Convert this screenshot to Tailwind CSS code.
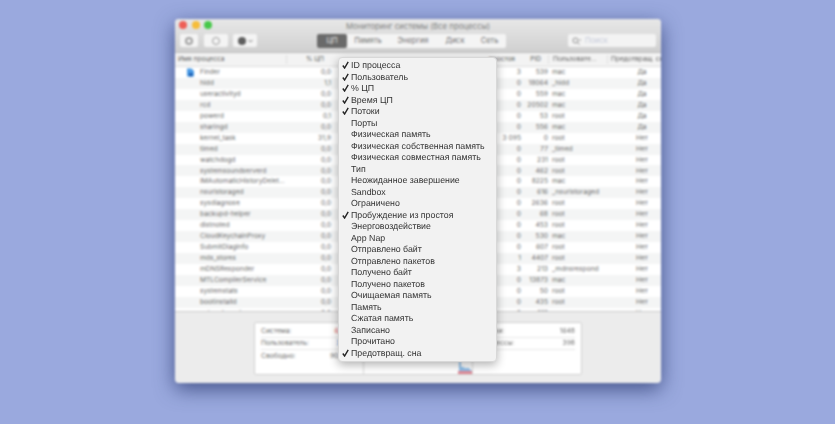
<!DOCTYPE html>
<html lang="ru">
<head>
<meta charset="utf-8">
<script src="https://cdn.jsdelivr.net/npm/@tailwindcss/browser@4"></script>
</head>
<body class="w-[835px] h-[424px] overflow-hidden relative bg-[#9aa9de] font-['Inter','Liberation_Sans',sans-serif]">
<div class="absolute left-[175px] top-[19px] w-[486px] h-[364px] blur-[0.9px] rounded-[4px] overflow-hidden bg-[#ececec] flex flex-col shadow-[0_6px_20px_rgba(30,45,100,0.7)]">
  <div class="h-[34px] shrink-0 relative bg-gradient-to-b from-[#e8e8e8] to-[#d0d0d0] border-b border-[#bdbdbd]">
    <div class="absolute left-[4px] top-[2px] flex gap-[4.5px]">
      <span class="w-[8px] h-[8px] rounded-full bg-[#ee5f57]"></span>
      <span class="w-[8px] h-[8px] rounded-full bg-[#f6bd3a]"></span>
      <span class="w-[8px] h-[8px] rounded-full bg-[#47c849]"></span>
    </div>
    <div class="text-center text-[7.8px] leading-[9px] pt-[3px] text-[#808080]">Мониторинг системы (Все процессы)</div>
    <div class="absolute left-[5px] top-[15px] flex">
      <div class="w-[18px] h-[13px] rounded-[2px] bg-[#f4f4f4] flex items-center justify-center"><span class="w-[8px] h-[8px] rounded-full border-2 border-[#a0a0a0]"></span></div>
      <div class="w-[24px] h-[13px] ml-[6px] rounded-[2px] bg-[#f4f4f4] flex items-center justify-center"><span class="w-[8px] h-[8px] rounded-full border border-[#9a9a9a]"></span></div>
      <div class="w-[24px] h-[13px] ml-[5px] rounded-[2px] bg-[#f4f4f4] flex items-center justify-center gap-[2px]"><span class="w-[8px] h-[8px] rounded-full bg-[#5e5e5e]"></span><svg width="5" height="4" viewBox="0 0 5 4" fill="none" stroke="#777" stroke-width="1"><path d="M.5 1 2.5 3 4.5 1"/></svg></div>
    </div>
    <div class="absolute left-[142px] top-[15px] h-[14px] w-[189px] flex text-[7.5px] text-[#6f6f6f] rounded-[2px] bg-[#f4f4f4] items-center">
      <div class="w-[30px] h-full rounded-[2px] bg-[#6a6a6a] text-[#eee] flex items-center justify-center">ЦП</div>
      <div class="w-[42px] text-center">Память</div>
      <div class="w-[48px] text-center">Энергия</div>
      <div class="w-[36px] text-center">Диск</div>
      <div class="w-[33px] text-center">Сеть</div>
    </div>
    <div class="absolute left-[393px] top-[15px] w-[88px] h-[13px] rounded-[2px] bg-[#f3f3f3] flex items-center gap-[3px] pl-[4px] text-[7.5px] text-[#c3c8d8]">
      <svg width="10" height="8" viewBox="0 0 10 8" fill="none" stroke="#8c8c8c" stroke-width="1"><circle cx="3.5" cy="3.5" r="2.5"/><path d="M5.3 5.3 7.5 7.5M7.5 3 9 3"/></svg>Поиск
    </div>
  </div>
  <div class="h-[14px] shrink-0 grid grid-cols-[162px_1fr_27px_59px_54px] items-center bg-[#f3f3f3] border-b border-[#dddddd] text-[6.6px] text-[#5c5c5c]">
    <div class="flex"><span class="w-[112px] pl-[3px] border-r border-[#e0e0e0]">Имя процесса</span><span class="flex-1 text-right pr-[13px]">% ЦП</span></div>
    <div class="text-right pr-[6px]">простоя</div>
    <div class="text-right pr-[7px]">PID</div>
    <div class="pl-[4px] whitespace-nowrap overflow-hidden border-l border-[#e0e0e0]">Пользовате...</div>
    <div class="pl-[3px] whitespace-nowrap overflow-hidden border-l border-[#e0e0e0]">Предотвращ. сна</div>
  </div>
  <div class="h-[245px] shrink-0 overflow-hidden bg-white text-[6.7px] text-[#6a6a6a] border-b border-[#c9c9c9]">
    <div class="h-[10.95px] bg-white grid grid-cols-[162px_1fr_27px_59px_54px] items-center leading-none"><div class="flex justify-between pr-[6px] pl-[25px] relative"><svg class="absolute left-[12px] -top-[1.5px]" width="7" height="9" viewBox="0 0 7 9"><path d="M0 .5h4.5L7 3v5.5H0z" fill="#4a9be6"/><path d="M2 5h3.5v3.5H2z" fill="#1d5fb0"/></svg><span>Finder</span><span>0,0</span></div><div class="text-right">3</div><div class="text-right">539</div><div class="pl-[4px]">mac</div><div class="text-center pl-[16px]">Да</div></div>
    <div class="h-[10.95px] bg-[#f4f5f5] grid grid-cols-[162px_1fr_27px_59px_54px] items-center leading-none"><div class="flex justify-between pr-[6px] pl-[25px]"><span>hidd</span><span>1,1</span></div><div class="text-right">0</div><div class="text-right">18064</div><div class="pl-[4px]">_hidd</div><div class="text-center pl-[16px]">Да</div></div>
    <div class="h-[10.95px] bg-white grid grid-cols-[162px_1fr_27px_59px_54px] items-center leading-none"><div class="flex justify-between pr-[6px] pl-[25px]"><span>useractivityd</span><span>0,0</span></div><div class="text-right">0</div><div class="text-right">559</div><div class="pl-[4px]">mac</div><div class="text-center pl-[16px]">Да</div></div>
    <div class="h-[10.95px] bg-[#f4f5f5] grid grid-cols-[162px_1fr_27px_59px_54px] items-center leading-none"><div class="flex justify-between pr-[6px] pl-[25px]"><span>rcd</span><span>0,0</span></div><div class="text-right">0</div><div class="text-right">20502</div><div class="pl-[4px]">mac</div><div class="text-center pl-[16px]">Да</div></div>
    <div class="h-[10.95px] bg-white grid grid-cols-[162px_1fr_27px_59px_54px] items-center leading-none"><div class="flex justify-between pr-[6px] pl-[25px]"><span>powerd</span><span>0,1</span></div><div class="text-right">0</div><div class="text-right">53</div><div class="pl-[4px]">root</div><div class="text-center pl-[16px]">Да</div></div>
    <div class="h-[10.95px] bg-[#f4f5f5] grid grid-cols-[162px_1fr_27px_59px_54px] items-center leading-none"><div class="flex justify-between pr-[6px] pl-[25px]"><span>sharingd</span><span>0,0</span></div><div class="text-right">0</div><div class="text-right">556</div><div class="pl-[4px]">mac</div><div class="text-center pl-[16px]">Да</div></div>
    <div class="h-[10.95px] bg-white grid grid-cols-[162px_1fr_27px_59px_54px] items-center leading-none"><div class="flex justify-between pr-[6px] pl-[25px]"><span>kernel_task</span><span>31,9</span></div><div class="text-right">3 095</div><div class="text-right">0</div><div class="pl-[4px]">root</div><div class="text-center pl-[16px]">Нет</div></div>
    <div class="h-[10.95px] bg-[#f4f5f5] grid grid-cols-[162px_1fr_27px_59px_54px] items-center leading-none"><div class="flex justify-between pr-[6px] pl-[25px]"><span>timed</span><span>0,0</span></div><div class="text-right">0</div><div class="text-right">77</div><div class="pl-[4px]">_timed</div><div class="text-center pl-[16px]">Нет</div></div>
    <div class="h-[10.95px] bg-white grid grid-cols-[162px_1fr_27px_59px_54px] items-center leading-none"><div class="flex justify-between pr-[6px] pl-[25px]"><span>watchdogd</span><span>0,0</span></div><div class="text-right">0</div><div class="text-right">231</div><div class="pl-[4px]">root</div><div class="text-center pl-[16px]">Нет</div></div>
    <div class="h-[10.95px] bg-[#f4f5f5] grid grid-cols-[162px_1fr_27px_59px_54px] items-center leading-none"><div class="flex justify-between pr-[6px] pl-[25px]"><span>systemsoundserverd</span><span>0,0</span></div><div class="text-right">0</div><div class="text-right">462</div><div class="pl-[4px]">root</div><div class="text-center pl-[16px]">Нет</div></div>
    <div class="h-[10.95px] bg-white grid grid-cols-[162px_1fr_27px_59px_54px] items-center leading-none"><div class="flex justify-between pr-[6px] pl-[25px]"><span>IMAutomaticHistoryDelet...</span><span>0,0</span></div><div class="text-right">0</div><div class="text-right">8225</div><div class="pl-[4px]">mac</div><div class="text-center pl-[16px]">Нет</div></div>
    <div class="h-[10.95px] bg-[#f4f5f5] grid grid-cols-[162px_1fr_27px_59px_54px] items-center leading-none"><div class="flex justify-between pr-[6px] pl-[25px]"><span>nsurlstoraged</span><span>0,0</span></div><div class="text-right">0</div><div class="text-right">616</div><div class="pl-[4px]">_nsurlstoraged</div><div class="text-center pl-[16px]">Нет</div></div>
    <div class="h-[10.95px] bg-white grid grid-cols-[162px_1fr_27px_59px_54px] items-center leading-none"><div class="flex justify-between pr-[6px] pl-[25px]"><span>sysdiagnose</span><span>0,0</span></div><div class="text-right">0</div><div class="text-right">2636</div><div class="pl-[4px]">root</div><div class="text-center pl-[16px]">Нет</div></div>
    <div class="h-[10.95px] bg-[#f4f5f5] grid grid-cols-[162px_1fr_27px_59px_54px] items-center leading-none"><div class="flex justify-between pr-[6px] pl-[25px]"><span>backupd-helper</span><span>0,0</span></div><div class="text-right">0</div><div class="text-right">68</div><div class="pl-[4px]">root</div><div class="text-center pl-[16px]">Нет</div></div>
    <div class="h-[10.95px] bg-white grid grid-cols-[162px_1fr_27px_59px_54px] items-center leading-none"><div class="flex justify-between pr-[6px] pl-[25px]"><span>distnoted</span><span>0,0</span></div><div class="text-right">0</div><div class="text-right">453</div><div class="pl-[4px]">root</div><div class="text-center pl-[16px]">Нет</div></div>
    <div class="h-[10.95px] bg-[#f4f5f5] grid grid-cols-[162px_1fr_27px_59px_54px] items-center leading-none"><div class="flex justify-between pr-[6px] pl-[25px]"><span>CloudKeychainProxy</span><span>0,0</span></div><div class="text-right">0</div><div class="text-right">530</div><div class="pl-[4px]">mac</div><div class="text-center pl-[16px]">Нет</div></div>
    <div class="h-[10.95px] bg-white grid grid-cols-[162px_1fr_27px_59px_54px] items-center leading-none"><div class="flex justify-between pr-[6px] pl-[25px]"><span>SubmitDiagInfo</span><span>0,0</span></div><div class="text-right">0</div><div class="text-right">607</div><div class="pl-[4px]">root</div><div class="text-center pl-[16px]">Нет</div></div>
    <div class="h-[10.95px] bg-[#f4f5f5] grid grid-cols-[162px_1fr_27px_59px_54px] items-center leading-none"><div class="flex justify-between pr-[6px] pl-[25px]"><span>mds_stores</span><span>0,0</span></div><div class="text-right">1</div><div class="text-right">4407</div><div class="pl-[4px]">root</div><div class="text-center pl-[16px]">Нет</div></div>
    <div class="h-[10.95px] bg-white grid grid-cols-[162px_1fr_27px_59px_54px] items-center leading-none"><div class="flex justify-between pr-[6px] pl-[25px]"><span>mDNSResponder</span><span>0,0</span></div><div class="text-right">3</div><div class="text-right">213</div><div class="pl-[4px]">_mdnsrespond</div><div class="text-center pl-[16px]">Нет</div></div>
    <div class="h-[10.95px] bg-[#f4f5f5] grid grid-cols-[162px_1fr_27px_59px_54px] items-center leading-none"><div class="flex justify-between pr-[6px] pl-[25px]"><span>MTLCompilerService</span><span>0,0</span></div><div class="text-right">0</div><div class="text-right">13873</div><div class="pl-[4px]">mac</div><div class="text-center pl-[16px]">Нет</div></div>
    <div class="h-[10.95px] bg-white grid grid-cols-[162px_1fr_27px_59px_54px] items-center leading-none"><div class="flex justify-between pr-[6px] pl-[25px]"><span>systemstats</span><span>0,0</span></div><div class="text-right">0</div><div class="text-right">50</div><div class="pl-[4px]">root</div><div class="text-center pl-[16px]">Нет</div></div>
    <div class="h-[10.95px] bg-[#f4f5f5] grid grid-cols-[162px_1fr_27px_59px_54px] items-center leading-none"><div class="flex justify-between pr-[6px] pl-[25px]"><span>bootinstalld</span><span>0,0</span></div><div class="text-right">0</div><div class="text-right">435</div><div class="pl-[4px]">root</div><div class="text-center pl-[16px]">Нет</div></div>
    <div class="h-[10.95px] bg-white grid grid-cols-[162px_1fr_27px_59px_54px] items-center leading-none"><div class="flex justify-between pr-[6px] pl-[25px]"><span>networkserviceproxy</span><span>0,0</span></div><div class="text-right">0</div><div class="text-right">612</div><div class="pl-[4px]">mac</div><div class="text-center pl-[16px]">Нет</div></div>
  </div>
  <div class="flex-1 pt-[10px] pl-[79px]">
    <div class="w-[328px] h-[53px] bg-white border border-[#cfcfcf] rounded-[2px] flex text-[6.7px] text-[#6a6a6a]">
      <div class="w-[108px] px-[6px] pt-[3px]">
        <div class="h-[12px] flex justify-between items-center border-b border-[#e6e6e6]"><span>Система:</span><span class="text-[#e0575a]">6,38 %</span></div>
        <div class="h-[12px] flex justify-between items-center border-b border-[#e6e6e6]"><span>Пользователь:</span><span class="text-[#3d8ee0]">3,19 %</span></div>
        <div class="h-[12px] flex justify-between items-center"><span>Свободно:</span><span>90,43 %</span></div>
      </div>
      <div class="w-[110px] border-l border-r border-[#dcdcdc] flex items-end justify-end">
        <svg width="14" height="12" viewBox="0 0 14 12"><path d="M0 12V9h1V0h2v5h3v1h5l3 3v3z" fill="#8fc0ea"/><path d="M0 12V9h14v3z" fill="#e08a96"/></svg>
      </div>
      <div class="flex-1 px-[6px] pt-[3px]">
        <div class="h-[12px] flex justify-between items-center border-b border-[#e6e6e6]"><span>Потоки:</span><span>1648</span></div>
        <div class="h-[12px] flex justify-between items-center border-b border-[#e6e6e6]"><span>Процессы:</span><span>398</span></div>
      </div>
    </div>
  </div>
</div>
<div class="absolute left-[338px] top-[57px] w-[159px] h-[305px] rounded-[4px] bg-[#f2f2f2] border border-[#d8d8d8] shadow-[0_3px_10px_rgba(0,0,0,0.3)] pt-[2px] font-['Liberation_Sans',sans-serif] [text-rendering:geometricPrecision] text-[8.8px] leading-[11.52px] text-[#333333] whitespace-nowrap">
  <div class="h-[11.52px] pl-[12px] relative"><svg class="absolute left-[3px] top-[1px]" width="7" height="8" viewBox="0 0 7 8" fill="none" stroke="#222222" stroke-width="1.4"><path d="M.8 4.5 2.6 7 6.2 .8"/></svg>ID процесса</div>
  <div class="h-[11.52px] pl-[12px] relative"><svg class="absolute left-[3px] top-[1px]" width="7" height="8" viewBox="0 0 7 8" fill="none" stroke="#222222" stroke-width="1.4"><path d="M.8 4.5 2.6 7 6.2 .8"/></svg>Пользователь</div>
  <div class="h-[11.52px] pl-[12px] relative"><svg class="absolute left-[3px] top-[1px]" width="7" height="8" viewBox="0 0 7 8" fill="none" stroke="#222222" stroke-width="1.4"><path d="M.8 4.5 2.6 7 6.2 .8"/></svg>% ЦП</div>
  <div class="h-[11.52px] pl-[12px] relative"><svg class="absolute left-[3px] top-[1px]" width="7" height="8" viewBox="0 0 7 8" fill="none" stroke="#222222" stroke-width="1.4"><path d="M.8 4.5 2.6 7 6.2 .8"/></svg>Время ЦП</div>
  <div class="h-[11.52px] pl-[12px] relative"><svg class="absolute left-[3px] top-[1px]" width="7" height="8" viewBox="0 0 7 8" fill="none" stroke="#222222" stroke-width="1.4"><path d="M.8 4.5 2.6 7 6.2 .8"/></svg>Потоки</div>
  <div class="h-[11.52px] pl-[12px]">Порты</div>
  <div class="h-[11.52px] pl-[12px]">Физическая память</div>
  <div class="h-[11.52px] pl-[12px]">Физическая собственная память</div>
  <div class="h-[11.52px] pl-[12px]">Физическая совместная память</div>
  <div class="h-[11.52px] pl-[12px]">Тип</div>
  <div class="h-[11.52px] pl-[12px]">Неожиданное завершение</div>
  <div class="h-[11.52px] pl-[12px]">Sandbox</div>
  <div class="h-[11.52px] pl-[12px]">Ограничено</div>
  <div class="h-[11.52px] pl-[12px] relative"><svg class="absolute left-[3px] top-[1px]" width="7" height="8" viewBox="0 0 7 8" fill="none" stroke="#222222" stroke-width="1.4"><path d="M.8 4.5 2.6 7 6.2 .8"/></svg>Пробуждение из простоя</div>
  <div class="h-[11.52px] pl-[12px]">Энерговоздействие</div>
  <div class="h-[11.52px] pl-[12px]">App Nap</div>
  <div class="h-[11.52px] pl-[12px]">Отправлено байт</div>
  <div class="h-[11.52px] pl-[12px]">Отправлено пакетов</div>
  <div class="h-[11.52px] pl-[12px]">Получено байт</div>
  <div class="h-[11.52px] pl-[12px]">Получено пакетов</div>
  <div class="h-[11.52px] pl-[12px]">Очищаемая память</div>
  <div class="h-[11.52px] pl-[12px]">Память</div>
  <div class="h-[11.52px] pl-[12px]">Сжатая память</div>
  <div class="h-[11.52px] pl-[12px]">Записано</div>
  <div class="h-[11.52px] pl-[12px]">Прочитано</div>
  <div class="h-[11.52px] pl-[12px] relative"><svg class="absolute left-[3px] top-[1px]" width="7" height="8" viewBox="0 0 7 8" fill="none" stroke="#222222" stroke-width="1.4"><path d="M.8 4.5 2.6 7 6.2 .8"/></svg>Предотвращ. сна</div>
</div>
</body>
</html>
